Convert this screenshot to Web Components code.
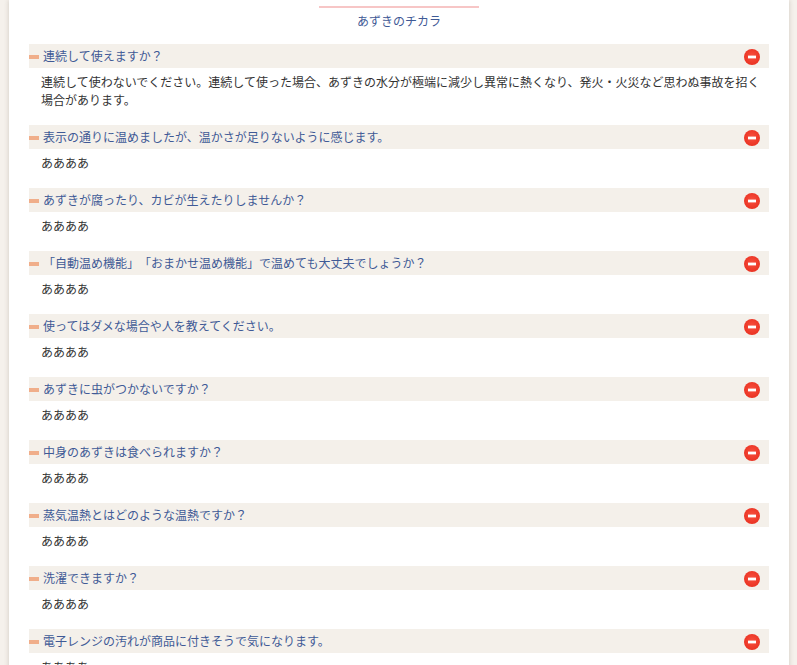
<!DOCTYPE html>
<html lang="ja">
<head>
<meta charset="utf-8">
<title>あずきのチカラ</title>
<style>
  html, body { margin: 0; height: 100%; overflow: hidden; }
  body {
    background: #f5f1ec;
    font-family: "Liberation Sans", "Noto Sans CJK JP", sans-serif;
    font-size: 12px;
    line-height: 18px;
    color: #333;
    text-spacing-trim: space-all;
  }
</style>
</head>
<body>
<faq-page>
  <faq-item q="連続して使えますか？">連続して使わないでください。連続して使った場合、あずきの水分が極端に減少し異常に熱くなり、発火・火災など思わぬ事故を招く場合があります。</faq-item>
  <faq-item q="表示の通りに温めましたが、温かさが足りないように感じます。">ああああ</faq-item>
  <faq-item q="あずきが腐ったり、カビが生えたりしませんか？">ああああ</faq-item>
  <faq-item q="「自動温め機能」「おまかせ温め機能」で温めても大丈夫でしょうか？">ああああ</faq-item>
  <faq-item q="使ってはダメな場合や人を教えてください。">ああああ</faq-item>
  <faq-item q="あずきに虫がつかないですか？">ああああ</faq-item>
  <faq-item q="中身のあずきは食べられますか？">ああああ</faq-item>
  <faq-item q="蒸気温熱とはどのような温熱ですか？">ああああ</faq-item>
  <faq-item q="洗濯できますか？">ああああ</faq-item>
  <faq-item q="電子レンジの汚れが商品に付きそうで気になります。">ああああ</faq-item>
</faq-page>
<script>
class FaqPage extends HTMLElement {
  constructor() {
    super();
    this.attachShadow({ mode: "open" });
    this.shadowRoot.innerHTML = `
      <style>
        :host {
          display: block;
          width: 780px;
          margin-left: 9px;
          min-height: 100vh;
          box-sizing: border-box;
          padding: 6px 20px 0;
          background: #fff;
          box-shadow: 0 0 5px rgba(60,40,20,0.2);
        }
        h2 {
          width: 160px;
          margin: 0 auto 13px;
          border-top: 2px solid #f7c6c6;
          padding-top: 5px;
          font-size: 12px;
          font-weight: normal;
          line-height: 18px;
          text-align: center;
          color: #3f5a96;
        }
      </style>
      <h2>あずきのチカラ</h2>
      <slot></slot>
    `;
  }
}

class FaqItem extends HTMLElement {
  constructor() {
    super();
    this.attachShadow({ mode: "open" });
  }

  connectedCallback() {
    const q = this.getAttribute("q") || "";
    this.shadowRoot.innerHTML = `
      <style>
        :host { display: block; }
        .q {
          display: flex;
          align-items: center;
          box-sizing: border-box;
          height: 24px;
          padding-top: 2px;
          background: #f4f0ea;
          color: #3f5a96;
        }
        .dash {
          flex: none;
          width: 10px;
          height: 4px;
          margin-right: 4px;
          background: #f0ae8a;
        }
        .text { flex: 1; }
        svg { flex: none; margin-right: 9px; }
        .a { padding: 6px 4px 15px 12px; }
      </style>
      <div class="q">
        <span class="dash"></span>
        <span class="text">${q}</span>
        <svg width="16" height="16" viewBox="0 0 16 16" aria-hidden="true">
          <defs>
            <radialGradient id="red" cx="50%" cy="45%" r="55%">
              <stop offset="0" stop-color="#f8503f"/>
              <stop offset="1" stop-color="#ea3323"/>
            </radialGradient>
          </defs>
          <circle cx="8" cy="8" r="8" fill="url(#red)"/>
          <rect x="4" y="6.6" width="8" height="2.8" fill="#fff"/>
        </svg>
      </div>
      <div class="a"><slot></slot></div>
    `;
  }
}

customElements.define("faq-page", FaqPage);
customElements.define("faq-item", FaqItem);
</script>
</body>
</html>
